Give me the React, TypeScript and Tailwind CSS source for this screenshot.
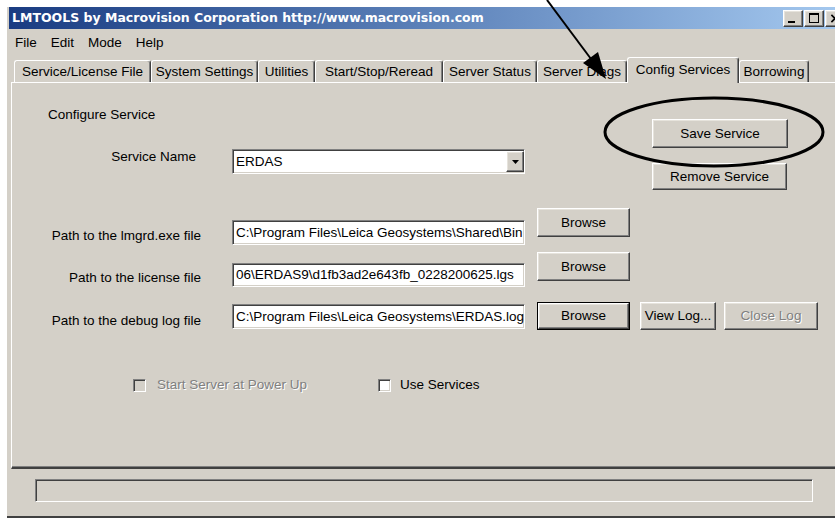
import type { ReactNode } from "react";

// Classic 3D borders used across the dialog
const raised =
  "border border-t-white border-l-white border-r-[#404040] border-b-[#404040] shadow-[inset_-1px_-1px_0_#808080,inset_1px_1px_0_#e6e3dc]";
const sunken =
  "border border-t-[#808080] border-l-[#808080] border-r-white border-b-white shadow-[inset_1px_1px_0_#404040,inset_-1px_-1px_0_#d4d0c8]";

const tabs = [
  { label: "Service/License File", w: "w-[137px]" },
  { label: "System Settings", w: "w-[107px]" },
  { label: "Utilities", w: "w-[57px]" },
  { label: "Start/Stop/Reread", w: "w-[128px]" },
  { label: "Server Status", w: "w-[94px]" },
  { label: "Server Diags", w: "w-[90px]" },
  { label: "Config Services", w: "w-[112px]", active: true },
  { label: "Borrowing", w: "w-[70px]" },
];

function Button({
  className,
  children,
  disabled,
  isDefault,
}: {
  className: string;
  children: ReactNode;
  disabled?: boolean;
  isDefault?: boolean;
}) {
  const face = (
    <div
      className={`flex h-full w-full items-center justify-center bg-[#d4d0c8] ${raised} ${
        disabled ? "text-[#808080] [text-shadow:1px_1px_0_#fff]" : "text-black"
      }`}
    >
      {children}
    </div>
  );
  if (isDefault) {
    return <div className={`shrink-0 border border-black ${className}`}>{face}</div>;
  }
  return <div className={`shrink-0 ${className}`}>{face}</div>;
}

function TextField({ value, className }: { value: string; className: string }) {
  return (
    <div
      className={`ml-[31px] flex w-[293px] shrink-0 items-center overflow-hidden whitespace-nowrap bg-white pl-[3px] ${sunken} ${className}`}
    >
      {value}
    </div>
  );
}

function Checkbox({ checked, disabled }: { checked?: boolean; disabled?: boolean }) {
  return (
    <div
      className={`h-[13px] w-[13px] shrink-0 ${sunken} ${disabled ? "bg-[#d4d0c8]" : "bg-white"}`}
    >
      {checked && (
        <svg viewBox="0 0 9 9" className="h-[9px] w-[9px]">
          <path d="M1 4l2 2 5-5" stroke="black" strokeWidth="2" fill="none" />
        </svg>
      )}
    </div>
  );
}

function CaptionButton({ kind }: { kind: "min" | "max" | "close" }) {
  return (
    <div className={`relative h-[17px] w-[20px] bg-[#d4d0c8] ${raised}`}>
      {kind === "min" && <div className="absolute bottom-[3px] left-[4px] h-[2px] w-[7px] bg-black" />}
      {kind === "max" && (
        <div className="absolute left-[4px] top-[2px] h-[10px] w-[10px] border border-t-2 border-black" />
      )}
      {kind === "close" && (
        <svg viewBox="0 0 10 10" className="absolute left-[4px] top-[3px] h-[9px] w-[10px]">
          <path d="M1 1l8 8M9 1l-8 8" stroke="black" strokeWidth="1.8" />
        </svg>
      )}
    </div>
  );
}

export default function App() {
  return (
    <div className="relative h-[518px] w-[835px] overflow-hidden bg-white pl-[7px] pt-[7px] font-['Liberation_Sans',Arial,sans-serif] text-[13.5px] leading-[16px] text-black">
      <div className="flex h-[511px] w-[842px] flex-col border-b-2 border-b-[#404040] bg-[#d4d0c8]">
        {/* Title bar */}
        <div className="mx-[2px] flex h-[22px] shrink-0 items-center bg-linear-to-r from-[#1a3c82] to-[#a6caf0] pl-[3px] pr-[2px]">
          <span className="font-['DejaVu_Sans',sans-serif] text-[12.5px] font-bold text-white">
            LMTOOLS by Macrovision Corporation http://www.macrovision.com
          </span>
          <div className="ml-auto flex gap-[1px]">
            <CaptionButton kind="min" />
            <CaptionButton kind="max" />
            <CaptionButton kind="close" />
          </div>
        </div>

        {/* Menu bar */}
        <div className="flex gap-[14px] pl-[8px] pt-[6px]">
          <span>File</span>
          <span>Edit</span>
          <span>Mode</span>
          <span>Help</span>
        </div>

        {/* Tab strip */}
        <div className="mt-[6px] flex h-[25px] items-end pl-[7px]">
          {tabs.map((t) =>
            t.active ? (
              <div
                key={t.label}
                className={`relative z-10 -mb-px flex h-[26px] ${t.w} items-start justify-center rounded-t-[3px] border border-b-0 border-t-white border-l-white border-r-[#404040] bg-[#d4d0c8] pt-[4px] shadow-[inset_-1px_0_0_#808080]`}
              >
                {t.label}
              </div>
            ) : (
              <div
                key={t.label}
                className={`flex h-[22px] ${t.w} items-center justify-center rounded-t-[3px] border border-b-0 border-t-white border-l-white border-r-[#404040] bg-[#d4d0c8] shadow-[inset_-1px_0_0_#808080]`}
              >
                {t.label}
              </div>
            )
          )}
        </div>

        {/* Config Services page */}
        <div className="mx-[4px] h-[387px] shrink-0 border-l border-t border-b-2 border-l-white border-t-white border-b-[#404040] shadow-[inset_0_-1px_0_#808080]">
          <div className="flex h-[125px]">
            <div className="w-[513px]">
              <div className="pl-[36px] pt-[24px]">Configure Service</div>
              <div className="mt-[26px] flex">
                <div className="w-[184px] text-right">Service Name</div>
                <div
                  className={`ml-[36px] flex h-[25px] w-[293px] items-center bg-white pl-[3px] ${sunken}`}
                >
                  <span className="flex-1">ERDAS</span>
                  <div className={`flex h-[21px] w-[18px] items-center justify-center bg-[#d4d0c8] ${raised}`}>
                    <svg viewBox="0 0 7 4" className="h-[4px] w-[7px]">
                      <path d="M0 0h7L3.5 4z" fill="black" />
                    </svg>
                  </div>
                </div>
              </div>
            </div>
            <div className="ml-[127px] flex flex-col">
              <Button className="mt-[36px] h-[29px] w-[136px]">Save Service</Button>
              <Button className="mt-[15px] h-[27px] w-[135px]">Remove Service</Button>
            </div>
          </div>

          {/* Path rows */}
          <div className="flex h-[44px] items-start">
            <div className="w-[189px] shrink-0 pt-[20px] text-right">Path to the lmgrd.exe file</div>
            <TextField className="mt-[12px] h-[25px]" value="C:\Program Files\Leica Geosystems\Shared\Bin" />
            <Button className="ml-[12px] h-[29px] w-[93px]">Browse</Button>
          </div>
          <div className="flex h-[50px] items-start">
            <div className="w-[189px] shrink-0 pt-[18px] text-right">Path to the license file</div>
            <TextField className="mt-[11px] h-[24px]" value="06\ERDAS9\d1fb3ad2e643fb_0228200625.lgs" />
            <Button className="ml-[12px] h-[29px] w-[93px]">Browse</Button>
          </div>
          <div className="flex h-[28px] items-start">
            <div className="w-[189px] shrink-0 pt-[11px] text-right">Path to the debug log file</div>
            <TextField className="mt-[2px] h-[25px]" value="C:\Program Files\Leica Geosystems\ERDAS.log" />
            <Button isDefault className="ml-[12px] h-[28px] w-[93px]">
              Browse
            </Button>
            <Button className="ml-[10px] h-[28px] w-[76px]">View Log...</Button>
            <Button disabled className="ml-[8px] h-[28px] w-[94px]">
              Close Log
            </Button>
          </div>

          {/* Options */}
          <div className="ml-[121px] mt-[47px] flex items-center">
            <div className="flex w-[245px] items-center">
              <Checkbox disabled />
              <span className="ml-[11px] text-[#808080] [text-shadow:1px_1px_0_#fff]">
                Start Server at Power Up
              </span>
            </div>
            <Checkbox />
            <span className="ml-[9px]">Use Services</span>
          </div>
        </div>

        {/* Status bar */}
        <div className={`ml-[28px] mt-[10px] h-[23px] w-[778px] ${sunken}`} />
      </div>

      {/* Callout drawn over the dialog */}
      <svg className="pointer-events-none absolute left-0 top-0" width="835" height="518" viewBox="0 0 835 518">
        <line x1="547" y1="0" x2="594" y2="63" stroke="black" strokeWidth="2" />
        <polygon points="606,79 583,63 598,52" fill="black" />
        <ellipse cx="714" cy="132" rx="109" ry="34" fill="none" stroke="black" strokeWidth="3" />
      </svg>
    </div>
  );
}
